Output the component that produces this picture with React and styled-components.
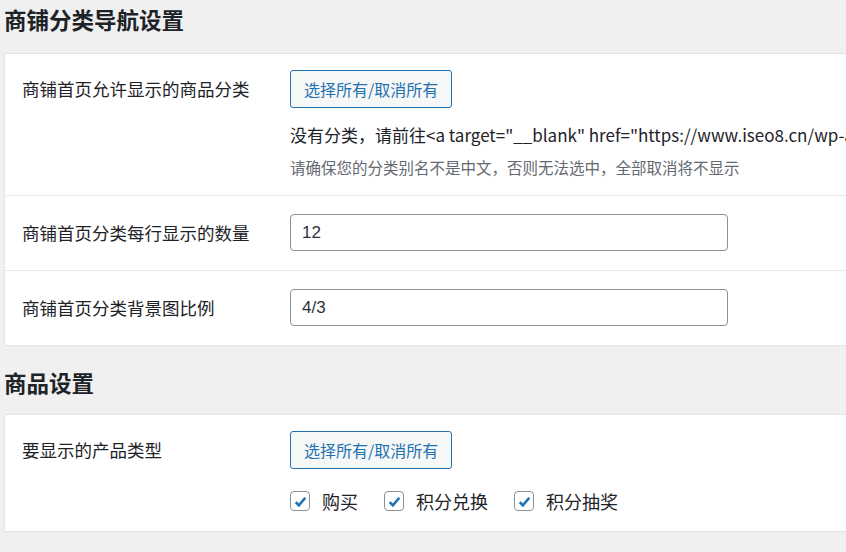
import React from "react";
import styled, { createGlobalStyle } from "styled-components";

const G = createGlobalStyle`
  body{margin:0;background:#f0f0f1;font-family:"Noto Sans CJK SC","Liberation Sans",sans-serif;color:#1d2327;overflow:hidden;}
`;
const Wrap = styled.div`padding:0 0 0 4px;width:842px;overflow:hidden;`;
const Title = styled.h2`font-size:22.5px;font-weight:700;margin:0;height:53px;line-height:38px;white-space:nowrap;`;
const Title2 = styled(Title)`height:68px;line-height:72px;`;
const Card = styled.div`background:#fff;border:1px solid #e2e4e7;border-right:none;`;
const Row = styled.div`display:flex;padding:${p=>p.pad||"16px 0 17px 17px"};border-top:${p=>p.first?"none":"1px solid #e8e8e8"};`;
const Label = styled.div`width:268px;font-size:17.5px;line-height:38px;flex-shrink:0;white-space:nowrap;`;
const Field = styled.div`display:flex;flex-direction:column;min-width:0;`;
const Btn = styled.button`align-self:flex-start;height:38px;padding:0 13px;border:1px solid #2271b1;border-radius:3px;background:#f6f7f7;color:#2271b1;font:16px "Noto Sans CJK SC",sans-serif;white-space:nowrap;`;
const Text = styled.div`font-size:17px;margin-top:14px;white-space:nowrap;line-height:26px;`;
const Desc = styled.div`font-size:15.5px;color:#646970;margin-top:8px;line-height:22px;white-space:nowrap;`;
const Input = styled.input`width:438px;height:37px;box-sizing:border-box;border:1px solid #8c8f94;border-radius:4px;padding:0 11px;font:17px "Liberation Sans",sans-serif;color:#2c3338;`;
const Checks = styled.div`display:flex;gap:26px;margin-top:19px;`;
const Check = styled.label`display:flex;align-items:center;gap:12px;font-size:18px;white-space:nowrap;`;
const Box = styled.span`width:18px;height:18px;border:1px solid #8c8f94;border-radius:4px;display:flex;align-items:center;justify-content:center;`;
const Tick = () => <Box><svg width="15" height="15" viewBox="0 0 14 14"><path d="M2.5 7.5l3 3 6-7" fill="none" stroke="#2271b1" strokeWidth="2.4"/></svg></Box>;

export default function App(){
  return <><G/><Wrap>
    <Title>商铺分类导航设置</Title>
    <Card>
      <Row first>
        <Label>商铺首页允许显示的商品分类</Label>
        <Field>
          <Btn>选择所有/取消所有</Btn>
          <Text>没有分类，请前往&lt;a target="__blank" href="https://www.iseo8.cn/wp-admin/</Text>
          <Desc>请确保您的分类别名不是中文，否则无法选中，全部取消将不显示</Desc>
        </Field>
      </Row>
      <Row pad="18px 0 18px 17px"><Label>商铺首页分类每行显示的数量</Label><Input defaultValue="12"/></Row>
      <Row pad="18px 0 18px 17px"><Label>商铺首页分类背景图比例</Label><Input defaultValue="4/3"/></Row>
    </Card>
    <Title2>商品设置</Title2>
    <Card>
      <Row first>
        <Label>要显示的产品类型</Label>
        <Field>
          <Btn>选择所有/取消所有</Btn>
          <Checks>
            <Check><Tick/>购买</Check>
            <Check><Tick/>积分兑换</Check>
            <Check><Tick/>积分抽奖</Check>
          </Checks>
        </Field>
      </Row>
    </Card>
  </Wrap></>;
}
